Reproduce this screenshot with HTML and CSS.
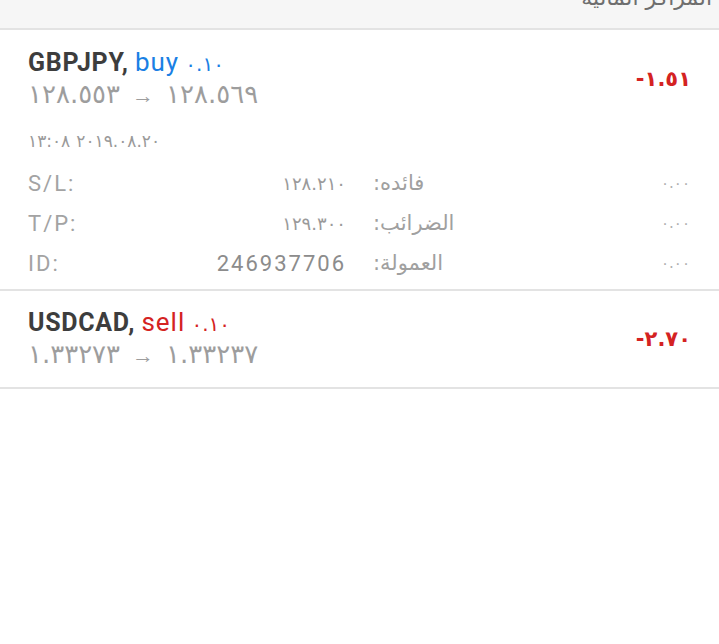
FILE: index.html
```html
<!DOCTYPE html>
<html lang="ar">
<head>
<meta charset="utf-8">
<link rel="stylesheet" href="styles.css">
</head>
<body>
<div class="header"><div class="header-title" dir="rtl">المراكز المالية</div></div>

<div class="card">
  <div class="top">
    <div class="main">
      <div class="title"><span class="sym">GBPJPY,</span> <span class="buy">buy</span> <span class="lot buy-lot">٠.١٠</span></div>
      <div class="price"><span>١٢٨.٥٥٣</span><span class="arrow">→</span><span>١٢٨.٥٦٩</span></div>
    </div>
    <div class="profit">-١.٥١</div>
  </div>
  <div class="date"><span>١٣:٠٨</span><span>٢٠١٩.٠٨.٢٠</span></div>
  <div class="details">
    <div class="cell"><span class="lbl">S/L:</span><span class="ar-val">١٢٨.٢١٠</span></div>
    <div class="cell"><span class="ar-lbl" dir="rtl">فائده:</span><span class="zero">٠.٠٠</span></div>
    <div class="cell"><span class="lbl">T/P:</span><span class="ar-val">١٢٩.٣٠٠</span></div>
    <div class="cell"><span class="ar-lbl" dir="rtl">الضرائب:</span><span class="zero">٠.٠٠</span></div>
    <div class="cell"><span class="lbl">ID:</span><span class="id-val">246937706</span></div>
    <div class="cell"><span class="ar-lbl" dir="rtl">العمولة:</span><span class="zero">٠.٠٠</span></div>
  </div>
</div>

<div class="card card-short">
  <div class="top">
    <div class="main">
      <div class="title"><span class="sym">USDCAD,</span> <span class="sell">sell</span> <span class="lot sell-lot">٠.١٠</span></div>
      <div class="price"><span>١.٣٣٢٧٣</span><span class="arrow">→</span><span>١.٣٣٢٣٧</span></div>
    </div>
    <div class="profit">-٢.٧٠</div>
  </div>
</div>
</body>
</html>
```

FILE: styles.css
```css
html, body {
  margin: 0;
  padding: 0;
  background: #ffffff;
}

body {
  font-family: Roboto, "DejaVu Sans", sans-serif;
  width: 719px;
  height: 644px;
  overflow: hidden;
}

.header {
  height: 28px;
  background: #f6f6f6;
  border-bottom: 2px solid #e3e3e3;
  overflow: hidden;
  display: flex;
  justify-content: flex-end;
  padding-right: 7px;
}

.header-title {
  font-family: "DejaVu Sans", sans-serif;
  font-size: 22px;
  line-height: 24px;
  color: #6e6e6e;
  margin-top: -14px;
}

.card {
  padding: 18px 28px 6px;
  border-bottom: 2px solid #e3e3e3;
}

.card-short {
  padding-top: 17px;
  padding-bottom: 15px;
}

.top {
  display: flex;
  align-items: center;
  justify-content: space-between;
}

.title {
  font-size: 25px;
  line-height: 28px;
  white-space: nowrap;
}

.sym {
  font-weight: 700;
  color: #3d3d3d;
  letter-spacing: 0.7px;
}

.buy {
  color: #1a7fe4;
  font-size: 26px;
  letter-spacing: 1px;
}

.sell {
  color: #d42222;
  font-size: 26px;
  letter-spacing: 1px;
}

.lot {
  font-family: "DejaVu Sans", sans-serif;
  font-size: 20px;
}

.buy-lot { color: #1a7fe4; }
.sell-lot { color: #d42222; }

.price {
  display: flex;
  align-items: baseline;
  gap: 12px;
  font-family: "DejaVu Sans", sans-serif;
  font-size: 26px;
  line-height: 32px;
  color: #9d9d9d;
}

.arrow {
  font-family: Roboto, sans-serif;
  font-size: 22px;
}

.profit {
  font-family: "DejaVu Sans", sans-serif;
  font-weight: 700;
  font-size: 21px;
  color: #d42222;
  margin-bottom: 3px;
}

.date {
  margin-top: 17px;
  display: flex;
  gap: 6px;
  font-family: "DejaVu Sans", sans-serif;
  font-size: 17px;
  line-height: 24px;
  color: #9a9a9a;
}

.details {
  margin-top: 10px;
  display: grid;
  grid-template-columns: 1fr 1fr;
  column-gap: 27px;
}

.cell {
  height: 40px;
  display: flex;
  align-items: center;
  justify-content: space-between;
}

.lbl {
  font-size: 22px;
  letter-spacing: 2px;
  color: #a3a3a3;
}

.id-val {
  font-size: 22px;
  letter-spacing: 2px;
  color: #8c8c8c;
}

.ar-val {
  font-family: "DejaVu Sans", sans-serif;
  font-size: 18px;
  color: #9a9a9a;
}

.ar-lbl {
  font-family: "DejaVu Sans", sans-serif;
  font-size: 21px;
  color: #a0a0a0;
  text-align: left;
}

.zero {
  font-family: "DejaVu Sans", sans-serif;
  font-size: 15px;
  color: #b0b0b0;
  padding-right: 1px;
}
```
